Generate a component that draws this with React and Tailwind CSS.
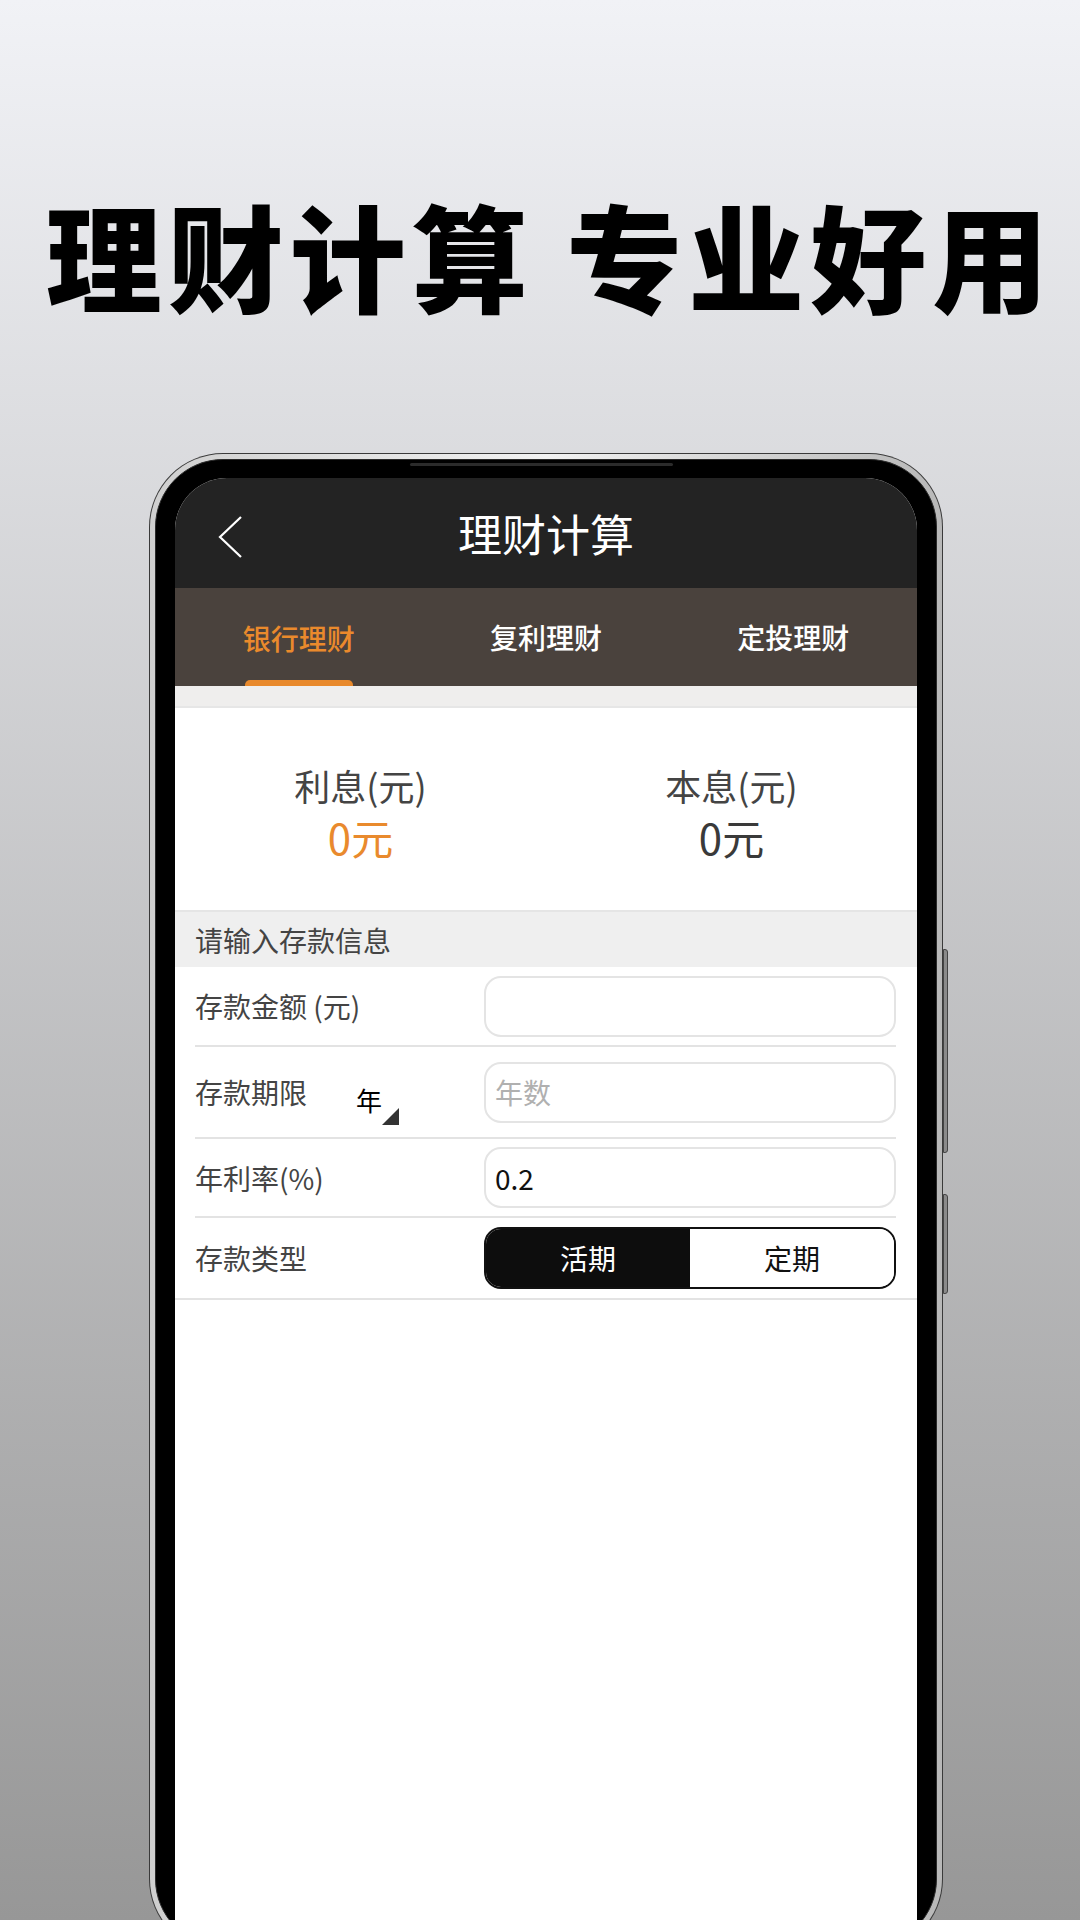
export default function App() {
  return (
    <div className="h-[1920px] w-[1080px] overflow-hidden bg-linear-to-b from-[#f1f2f6] to-[#979797] font-['Noto_Sans_CJK_SC','Noto_Sans',sans-serif]">
      {/* Headline */}
      <h1 className="pl-[20px] pt-[192px] text-center text-[116px] font-black leading-[122px] tracking-[6px] text-black">
        理财计算 专业好用
      </h1>

      {/* Phone frame */}
      <div className="relative ml-[149px] mt-[139px] h-[1500px] w-[794px] rounded-[74px] bg-[#3a3a3a] p-[1px]">
        <div className="absolute right-[-5px] top-[496px] h-[204px] w-[5px] rounded-r-[3px] border border-[#444] bg-[#8a8a8a]" />
        <div className="absolute right-[-5px] top-[741px] h-[100px] w-[5px] rounded-r-[3px] border border-[#444] bg-[#8a8a8a]" />

        <div className="h-full rounded-[73px] bg-linear-to-r from-[#cfcfcf] via-[#f2f2f2] to-[#b8b8b8] p-[5px]">
          <div className="relative h-full rounded-[68px] border border-[#2a2a2a] bg-black px-[19px] pt-[18px]">
            <div className="absolute left-[254px] top-[3px] h-[3px] w-[263px] rounded-full bg-[#2b2b2b]" />

            {/* Screen */}
            <div className="flex h-full flex-col overflow-hidden rounded-t-[52px] bg-white">
              {/* Header */}
              <div className="grid h-[110px] shrink-0 grid-cols-[1fr_auto_1fr] items-center bg-[#232323]">
                <svg className="ml-[43px] mt-[8px] h-[44px] w-[26px]" viewBox="0 0 26 44">
                  <path d="M23 2 L2 22 L23 42" fill="none" stroke="white" strokeWidth="2.2" />
                </svg>
                <div className="text-[44px] leading-none text-white">理财计算</div>
                <div />
              </div>

              {/* Tabs */}
              <div className="grid h-[98px] shrink-0 grid-cols-3 bg-[#4a423d] text-[28px] font-medium">
                <div className="flex flex-col items-center">
                  <div className="flex flex-1 items-center pt-[8px] text-[#ea8a2c]">银行理财</div>
                  <div className="h-[6px] w-[108px] rounded-t-[5px] bg-[#e8892c]" />
                </div>
                <div className="flex items-center justify-center text-white">复利理财</div>
                <div className="flex items-center justify-center text-white">定投理财</div>
              </div>

              <div className="h-[22px] shrink-0 border-b-2 border-[#e6e6e6] bg-[#efeeed]" />

              {/* Results */}
              <div className="grid h-[204px] shrink-0 grid-cols-2 border-b-2 border-[#e5e5e5] bg-white pt-[10px]">
                <div className="flex flex-col items-center justify-center">
                  <div className="text-[36px] leading-[46px] text-[#444]">利息(元)</div>
                  <div className="text-[42px] leading-[58px] text-[#e98a2d]">0元</div>
                </div>
                <div className="flex flex-col items-center justify-center">
                  <div className="text-[36px] leading-[46px] text-[#444]">本息(元)</div>
                  <div className="text-[42px] leading-[58px] text-[#3a3a3a]">0元</div>
                </div>
              </div>

              <div className="flex h-[55px] shrink-0 items-center bg-[#efefef] pl-[20px] text-[28px] text-[#444]">
                请输入存款信息
              </div>

              {/* Form */}
              <div className="border-b-2 border-[#e3e3e3]">
                <div className="ml-[20px] mr-[21px] text-[28px] text-[#444]">
                  <div className="flex h-[80px] items-center border-b-2 border-[#e3e3e3]">
                    <div className="w-[289px] leading-none">存款金额 (元)</div>
                    <input
                      readOnly
                      className="h-[61px] min-w-0 flex-1 rounded-[17px] border-2 border-[#e4e4e4] bg-white px-[9px] text-[28px] text-[#111] outline-none"
                    />
                  </div>

                  <div className="flex h-[92px] items-center border-b-2 border-[#e3e3e3]">
                    <div className="flex w-[289px] items-center leading-none">
                      <span>存款期限</span>
                      <span className="ml-[49px] mt-[16px] text-[26px] text-black">年</span>
                      <svg className="mt-[49px] h-[17px] w-[17px]" viewBox="0 0 17 17">
                        <polygon points="17,0 17,17 0,17" fill="#333" />
                      </svg>
                    </div>
                    <input
                      readOnly
                      placeholder="年数"
                      className="h-[61px] min-w-0 flex-1 rounded-[17px] border-2 border-[#e4e4e4] bg-white px-[9px] text-[28px] text-[#111] outline-none placeholder:text-[#b0b0b0]"
                    />
                  </div>

                  <div className="flex h-[79px] items-center border-b-2 border-[#e3e3e3]">
                    <div className="w-[289px] leading-none">年利率(%)</div>
                    <input
                      readOnly
                      value="0.2"
                      className="h-[61px] min-w-0 flex-1 rounded-[17px] border-2 border-[#e4e4e4] bg-white px-[9px] text-[28px] text-[#111] outline-none"
                    />
                  </div>

                  <div className="flex h-[80px] items-center">
                    <div className="w-[289px] leading-none">存款类型</div>
                    <div className="grid h-[62px] flex-1 grid-cols-2 overflow-hidden rounded-[17px] border-2 border-[#111]">
                      <div className="flex items-center justify-center bg-[#0d0d0d] text-white">活期</div>
                      <div className="flex items-center justify-center bg-white text-[#111]">定期</div>
                    </div>
                  </div>
                </div>
              </div>

              <div className="flex-1 bg-white" />
            </div>
          </div>
        </div>
      </div>
    </div>
  );
}
